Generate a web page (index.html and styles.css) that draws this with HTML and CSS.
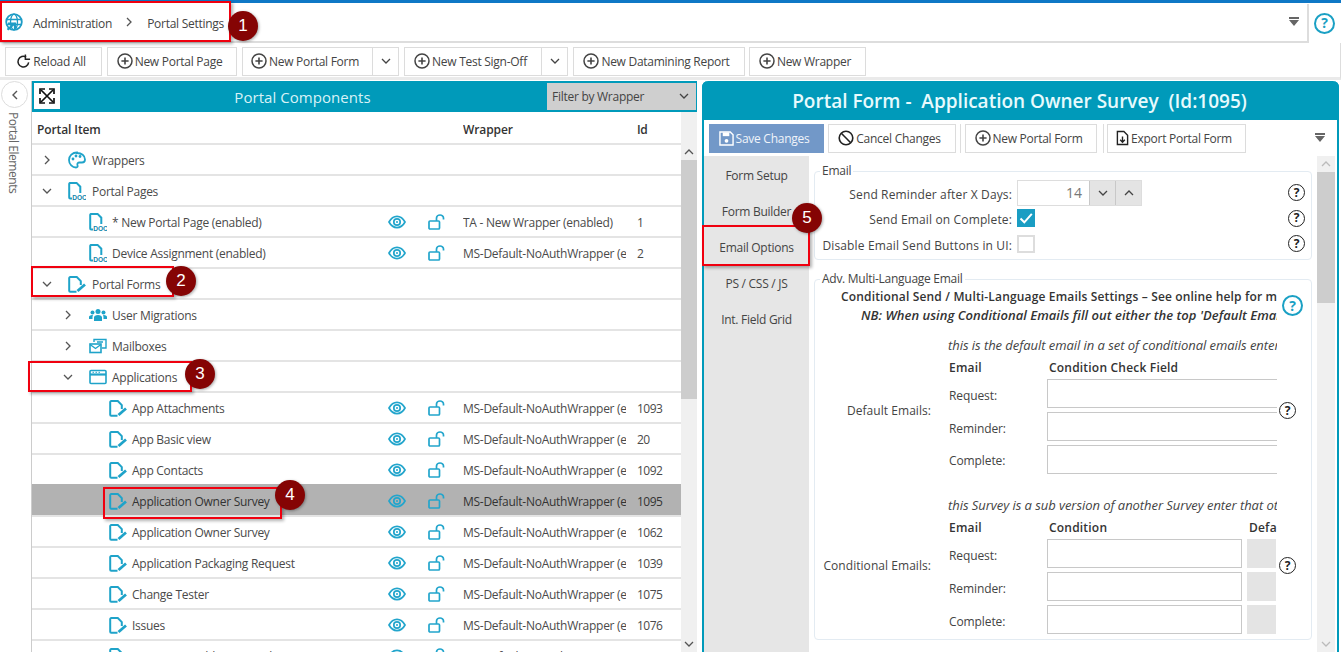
FILE: index.html
```html
<!DOCTYPE html>
<html lang="en">
<head>
<meta charset="utf-8">
<title>Portal Settings</title>
<link rel="stylesheet" href="styles.css">
</head>
<body>
<svg class="defs" width="0" height="0" aria-hidden="true">
  <symbol id="i-plus" viewBox="0 0 16 16"><circle cx="8" cy="8" r="7" fill="none" stroke="currentColor" stroke-width="1.500"/><path d="M8 4.400v7.200M4.400 8h7.200" stroke="currentColor" stroke-width="1.600"/></symbol>
  <symbol id="i-down" viewBox="0 0 12 12"><path d="M2 4l4 4 4-4" fill="none" stroke="currentColor" stroke-width="1.300"/></symbol>
  <symbol id="i-up" viewBox="0 0 12 12"><path d="M2 8l4-4 4 4" fill="none" stroke="currentColor" stroke-width="1.300"/></symbol>
  <symbol id="i-right" viewBox="0 0 12 12"><path d="M4 2l4 4-4 4" fill="none" stroke="currentColor" stroke-width="1.300"/></symbol>
  <symbol id="i-left" viewBox="0 0 12 12"><path d="M8 2L4 6l4 4" fill="none" stroke="currentColor" stroke-width="1.400"/></symbol>
  <symbol id="i-form" viewBox="0 0 18 17"><path d="M8.500 15.800H2.200a1 1 0 0 1-1-1V2.100a1 1 0 0 1 1-1H8.800L12.800 5.100V9" fill="none" stroke="currentColor" stroke-width="2"/><path d="M9.500 15L17 8.500" stroke="currentColor" stroke-width="2.800"/></symbol>
  <symbol id="i-doc" viewBox="0 0 18 18"><path d="M4 16.500H2.200a1 1 0 0 1-1-1V1.900a1 1 0 0 1 1-1H8.500L12.300 4.700V11" fill="none" stroke="currentColor" stroke-width="2"/><text x="4.200" y="17.600" font-family="Liberation Sans" font-size="6.600" font-weight="700" fill="#0f86ab" letter-spacing="0">DOC</text></symbol>
  <symbol id="i-eye" viewBox="0 0 18 14"><path d="M1 7c2-3.700 5-5.600 8-5.600S15 3.300 17 7c-2 3.700-5 5.600-8 5.600S3 10.700 1 7z" fill="none" stroke="currentColor" stroke-width="1.700"/><circle cx="9" cy="7" r="3.200" fill="none" stroke="currentColor" stroke-width="1.700"/><circle cx="9" cy="7" r="1" fill="currentColor"/></symbol>
  <symbol id="i-lock" viewBox="0 0 18 16"><rect x="1" y="7" width="10.500" height="8" rx="1" fill="none" stroke="currentColor" stroke-width="1.700"/><path d="M8.500 7V4a3.500 3 0 0 1 7 0v1.500" fill="none" stroke="currentColor" stroke-width="1.700"/></symbol>
</svg>

<header class="topbar">
  <nav class="crumbs">
    <svg class="globe" viewBox="0 0 18 18" width="18" height="18"><circle cx="9" cy="9" r="7.800" fill="none" stroke="#1e9cc6" stroke-width="1.800"/><ellipse cx="9" cy="9" rx="3.500" ry="7.800" fill="none" stroke="#1e9cc6" stroke-width="1.300"/><path d="M1.500 6.500h15M1.500 11.500h15" stroke="#1e9cc6" stroke-width="1.300"/><path d="M10 10L2.500 16.800M3 10.500h7v6" fill="none" stroke="#1e9cc6" stroke-width="2.200"/></svg>
    <span>Administration</span>
    <svg class="crumb-sep" width="12" height="12"><use href="#i-right"/></svg>
    <span>Portal Settings</span>
  </nav>
  <span class="tri"></span>
  <div class="top-help"><span class="help help-teal help-lg">?</span></div>
</header>

<div class="toolbar">
  <button class="btn btn-reload"><svg viewBox="0 0 16 16" width="15" height="15"><path d="M13.500 9A5.700 5.700 0 1 1 10.800 3.300" fill="none" stroke="#222" stroke-width="1.600"/><path d="M10 0.500v5h5" fill="none" stroke="#222" stroke-width="1.600"/></svg>Reload All</button>
  <button class="btn btn-page"><svg width="16" height="16"><use href="#i-plus"/></svg>New Portal Page</button>
  <div class="split"><button class="btn btn-form"><svg width="16" height="16"><use href="#i-plus"/></svg>New Portal Form</button><button class="btn drop"><svg width="12" height="12"><use href="#i-down"/></svg></button></div>
  <div class="split"><button class="btn btn-test"><svg width="16" height="16"><use href="#i-plus"/></svg>New Test Sign-Off</button><button class="btn drop"><svg width="12" height="12"><use href="#i-down"/></svg></button></div>
  <button class="btn btn-mine"><svg width="16" height="16"><use href="#i-plus"/></svg>New Datamining Report</button>
  <button class="btn btn-wrap"><svg width="16" height="16"><use href="#i-plus"/></svg>New Wrapper</button>
</div>

<main class="main">
  <aside class="rail">
    <button class="collapse"><svg width="12" height="12"><use href="#i-left"/></svg></button>
    <span class="rail-text">Portal Elements</span>
  </aside>

  <section class="tree-panel">
    <div class="tree-head">
      <button class="expand"><svg viewBox="0 0 16 16" width="16" height="16"><path d="M2 2l12 12M14 2L2 14" stroke="#111" stroke-width="1.700"/><path d="M1 6V1h5M10 1h5v5M15 10v5h-5M6 15H1v-5" fill="none" stroke="#111" stroke-width="1.700"/></svg></button>
      <h2 class="tree-title">Portal Components</h2>
      <div class="filter"><span>Filter by Wrapper</span><svg width="12" height="12"><use href="#i-down"/></svg></div>
    </div>
    <div class="tree-body">
      <div class="tree-scroll">
        <div class="row row-head"><span class="col-name">Portal Item</span><span class="col-wrap">Wrapper</span><span class="col-id">Id</span></div>

        <div class="row"><span class="col-name lvl0"><svg class="chev" width="12" height="12"><use href="#i-right"/></svg><svg class="ic" viewBox="0 0 18 18" width="18" height="18"><path d="M9 1.500C4.500 1.500 1 4.700 1 9s3.500 7.500 7 7.500c1.500 0 2-1 1.500-2.200-.6-1.500.3-2.800 2-2.800H14c2 0 3-1.200 3-3 0-4-3.500-6.500-8-6.500z" fill="none" stroke="currentColor" stroke-width="1.800"/><circle cx="5" cy="8" r="1.400" fill="currentColor"/><circle cx="8" cy="5" r="1.400" fill="currentColor"/><circle cx="12" cy="5.500" r="1.400" fill="currentColor"/></svg>Wrappers</span></div>
        <div class="row"><span class="col-name lvl0"><svg class="chev" width="12" height="12"><use href="#i-down"/></svg><svg class="ic" width="18" height="18"><use href="#i-doc"/></svg>Portal Pages</span></div>
        <div class="row"><span class="col-name lvl2"><svg class="ic" width="18" height="18"><use href="#i-doc"/></svg>* New Portal Page (enabled)</span><span class="col-act"><svg width="18" height="14"><use href="#i-eye"/></svg><svg width="18" height="16"><use href="#i-lock"/></svg></span><span class="col-wrap">TA - New Wrapper (enabled)</span><span class="col-id">1</span></div>
        <div class="row"><span class="col-name lvl2"><svg class="ic" width="18" height="18"><use href="#i-doc"/></svg>Device Assignment (enabled)</span><span class="col-act"><svg width="18" height="14"><use href="#i-eye"/></svg><svg width="18" height="16"><use href="#i-lock"/></svg></span><span class="col-wrap">MS-Default-NoAuthWrapper (enabled)</span><span class="col-id">2</span></div>
        <div class="row"><span class="col-name lvl0"><svg class="chev" width="12" height="12"><use href="#i-down"/></svg><svg class="ic" width="18" height="17"><use href="#i-form"/></svg>Portal Forms</span></div>
        <div class="row"><span class="col-name lvl1"><svg class="chev" width="12" height="12"><use href="#i-right"/></svg><svg class="ic" viewBox="0 0 18 14" width="18" height="14"><circle cx="9" cy="3.500" r="2.500" fill="currentColor"/><circle cx="3.500" cy="4.500" r="2" fill="currentColor"/><circle cx="14.500" cy="4.500" r="2" fill="currentColor"/><path d="M5 13V9.500C5 8 6.500 7 9 7s4 1 4 2.500V13zM0 11V9c0-1 1-2 3.500-2l.5.500C3.500 8 3.500 9 3.500 11zM18 11V9c0-1-1-2-3.500-2l-.5.500c.5.500.500 1.500.500 3.500z" fill="currentColor"/></svg>User Migrations</span></div>
        <div class="row"><span class="col-name lvl1"><svg class="chev" width="12" height="12"><use href="#i-right"/></svg><svg class="ic" viewBox="0 0 18 16" width="18" height="16"><path d="M5 4V1.500h12V10h-4" fill="none" stroke="currentColor" stroke-width="1.400"/><rect x="1" y="6" width="11" height="8.500" fill="none" stroke="currentColor" stroke-width="1.600"/><path d="M1 6.500l5.500 4 5.500-4M8 4h6" fill="none" stroke="currentColor" stroke-width="1.400"/></svg>Mailboxes</span></div>
        <div class="row"><span class="col-name lvl1"><svg class="chev" width="12" height="12"><use href="#i-down"/></svg><svg class="ic" viewBox="0 0 18 16" width="18" height="16"><rect x="1" y="1.500" width="16" height="13" rx="1" fill="none" stroke="currentColor" stroke-width="1.600"/><path d="M1 5.500h16" stroke="currentColor" stroke-width="2.200"/><path d="M3.500 3.300h1.500M6.500 3.300H8M9.500 3.300H11" stroke="currentColor" stroke-width="1"/></svg>Applications</span></div>

        <div class="row"><span class="col-name lvl3"><svg class="ic" width="18" height="17"><use href="#i-form"/></svg>App Attachments</span><span class="col-act"><svg width="18" height="14"><use href="#i-eye"/></svg><svg width="18" height="16"><use href="#i-lock"/></svg></span><span class="col-wrap">MS-Default-NoAuthWrapper (enabled)</span><span class="col-id">1093</span></div>
        <div class="row"><span class="col-name lvl3"><svg class="ic" width="18" height="17"><use href="#i-form"/></svg>App Basic view</span><span class="col-act"><svg width="18" height="14"><use href="#i-eye"/></svg><svg width="18" height="16"><use href="#i-lock"/></svg></span><span class="col-wrap">MS-Default-NoAuthWrapper (enabled)</span><span class="col-id">20</span></div>
        <div class="row"><span class="col-name lvl3"><svg class="ic" width="18" height="17"><use href="#i-form"/></svg>App Contacts</span><span class="col-act"><svg width="18" height="14"><use href="#i-eye"/></svg><svg width="18" height="16"><use href="#i-lock"/></svg></span><span class="col-wrap">MS-Default-NoAuthWrapper (enabled)</span><span class="col-id">1092</span></div>
        <div class="row row-sel"><span class="col-name lvl3"><svg class="ic" width="18" height="17"><use href="#i-form"/></svg>Application Owner Survey</span><span class="col-act"><svg width="18" height="14"><use href="#i-eye"/></svg><svg width="18" height="16"><use href="#i-lock"/></svg></span><span class="col-wrap">MS-Default-NoAuthWrapper (enabled)</span><span class="col-id">1095</span></div>
        <div class="row"><span class="col-name lvl3"><svg class="ic" width="18" height="17"><use href="#i-form"/></svg>Application Owner Survey</span><span class="col-act"><svg width="18" height="14"><use href="#i-eye"/></svg><svg width="18" height="16"><use href="#i-lock"/></svg></span><span class="col-wrap">MS-Default-NoAuthWrapper (enabled)</span><span class="col-id">1062</span></div>
        <div class="row"><span class="col-name lvl3"><svg class="ic" width="18" height="17"><use href="#i-form"/></svg>Application Packaging Request</span><span class="col-act"><svg width="18" height="14"><use href="#i-eye"/></svg><svg width="18" height="16"><use href="#i-lock"/></svg></span><span class="col-wrap">MS-Default-NoAuthWrapper (enabled)</span><span class="col-id">1039</span></div>
        <div class="row"><span class="col-name lvl3"><svg class="ic" width="18" height="17"><use href="#i-form"/></svg>Change Tester</span><span class="col-act"><svg width="18" height="14"><use href="#i-eye"/></svg><svg width="18" height="16"><use href="#i-lock"/></svg></span><span class="col-wrap">MS-Default-NoAuthWrapper (enabled)</span><span class="col-id">1075</span></div>
        <div class="row"><span class="col-name lvl3"><svg class="ic" width="18" height="17"><use href="#i-form"/></svg>Issues</span><span class="col-act"><svg width="18" height="14"><use href="#i-eye"/></svg><svg width="18" height="16"><use href="#i-lock"/></svg></span><span class="col-wrap">MS-Default-NoAuthWrapper (enabled)</span><span class="col-id">1076</span></div>
        <div class="row"><span class="col-name lvl3"><svg class="ic" width="18" height="17"><use href="#i-form"/></svg>Messenger Address Search</span><span class="col-act"><svg width="18" height="14"><use href="#i-eye"/></svg><svg width="18" height="16"><use href="#i-lock"/></svg></span><span class="col-wrap">MS-Default-NoAuthWrapper (enabled)</span><span class="col-id">1070</span></div>
      </div>
      <div class="vbar vbar-tree"><span class="vbar-top"><svg width="12" height="12"><use href="#i-up"/></svg></span><span class="vbar-thumb"></span><span class="vbar-fill"></span><span class="vbar-end"><svg width="12" height="12"><use href="#i-down"/></svg></span></div>
    </div>
  </section>

  <section class="form-panel">
    <h1 class="form-title">Portal Form -&nbsp; Application Owner Survey&nbsp; (Id:1095)</h1>
    <div class="form-tools">
      <button class="btn btn-save"><svg viewBox="0 0 16 16" width="15" height="15"><path d="M1 1h11l3 3v11H1z" fill="none" stroke="#fff" stroke-width="1.500"/><path d="M4 1.500h7v4H4z" fill="#fff"/><circle cx="8" cy="10.500" r="2" fill="#fff"/></svg>Save Changes</button>
      <button class="btn btn-cancel"><svg viewBox="0 0 16 16" width="16" height="16"><circle cx="8" cy="8" r="6.800" fill="none" stroke="#222" stroke-width="1.600"/><path d="M3.300 3.300l9.400 9.400" stroke="#222" stroke-width="1.600"/></svg>Cancel Changes</button>
      <span class="tool-sep"></span>
      <button class="btn btn-newform"><svg width="16" height="16"><use href="#i-plus"/></svg>New Portal Form</button>
      <span class="tool-sep sep2"></span>
      <button class="btn btn-export"><svg viewBox="0 0 14 16" width="13" height="16"><path d="M1.500 1h7l4 4v10h-11z" fill="none" stroke="#222" stroke-width="1.500"/><path d="M7 6.500v6M4.500 10L7 12.500 9.500 10" fill="none" stroke="#222" stroke-width="1.500"/></svg>Export Portal Form</button>
      <span class="tri tri-tools"></span>
    </div>
    <div class="form-body">
      <ul class="tabs">
        <li>Form Setup</li>
        <li>Form Builder</li>
        <li class="tab-on">Email Options</li>
        <li>PS / CSS / JS</li>
        <li>Int. Field Grid</li>
      </ul>
      <div class="content">
        <fieldset class="group group-email">
          <legend>Email</legend>
          <div class="opt">
            <label>Send Reminder after X Days:</label>
            <div class="spin"><span class="spin-val">14</span><span class="spin-btn"><svg width="12" height="12"><use href="#i-down"/></svg></span><span class="spin-btn"><svg width="12" height="12"><use href="#i-up"/></svg></span></div>
            <span class="help help-end">?</span>
          </div>
          <div class="opt">
            <label>Send Email on Complete:</label>
            <span class="check check-on"><svg viewBox="0 0 18 18" width="18" height="18"><path d="M3.500 9.500l3.800 3.800 7.500-8.500" fill="none" stroke="#fff" stroke-width="2"/></svg></span>
            <span class="help help-end">?</span>
          </div>
          <div class="opt">
            <label>Disable Email Send Buttons in UI:</label>
            <span class="check"></span>
            <span class="help help-end">?</span>
          </div>
        </fieldset>

        <fieldset class="group group-adv">
          <legend>Adv. Multi-Language Email</legend>
          <div class="adv">
            <div class="adv-clip">
              <p class="note-b">Conditional Send / Multi-Language Emails Settings – See online help for more information</p>
              <p class="note-bi">NB: When using Conditional Emails fill out either the top 'Default Emails' section or the bottom section</p>

              <p class="note-i note-first">this is the default email in a set of conditional emails enter the details here</p>
              <div class="mail-block">
                <span class="mail-label">Default Emails:</span>
                <div class="mail-grid mail-grid-a">
                  <b>Email</b><b>Condition Check Field</b>
                  <span>Request:</span><span class="inp"></span>
                  <span>Reminder:</span><span class="inp"></span>
                  <span>Complete:</span><span class="inp"></span>
                </div>
              </div>

              <p class="note-i note-second">this Survey is a sub version of another Survey enter that other Survey here</p>
              <div class="mail-block mail-block-c">
                <span class="mail-label mail-label-c">Conditional Emails:</span>
                <div class="mail-grid mail-grid-b">
                  <b>Email</b><b>Condition</b><b class="hdr-def">Default</b>
                  <span>Request:</span><span class="inp"></span><span class="gray"></span>
                  <span>Reminder:</span><span class="inp"></span><span class="gray"></span>
                  <span>Complete:</span><span class="inp"></span><span class="gray"></span>
                </div>
              </div>
            </div>
            <div class="adv-helps">
              <span class="help help-teal help-lg">?</span>
              <span class="help help-a">?</span>
              <span class="help help-b">?</span>
            </div>
          </div>
        </fieldset>
      </div>
      <div class="vbar vbar-form"><span class="vbar-top"><svg width="12" height="12"><use href="#i-up"/></svg></span><span class="vbar-thumb"></span><span class="vbar-fill"></span><span class="vbar-end"><svg width="12" height="12"><use href="#i-down"/></svg></span></div>
    </div>
  </section>
</main>

<div class="mark m1"></div><span class="badge b1">1</span>
<div class="mark m2"></div><span class="badge b2">2</span>
<div class="mark m3"></div><span class="badge b3">3</span>
<div class="mark m4"></div><span class="badge b4">4</span>
<div class="mark m5"></div><span class="badge b5">5</span>
</body>
</html>
```
FILE: styles.css
```css
* { box-sizing: border-box; }
html, body { margin: 0; padding: 0; }
body {
  position: relative;
  width: 1341px;
  height: 652px;
  overflow: hidden;
  background: #fff;
  font-family: "Open Sans", "Noto Sans", sans-serif;
  font-size: 12px;
  color: #444;
  letter-spacing: -0.27px;
}
.defs { position: absolute; }
button { font: inherit; letter-spacing: inherit; color: inherit; }
svg { flex: none; display: block; }

/* top */
.topbar {
  height: 43px;
  border-top: 3px solid #0f78c6;
  display: flex;
  align-items: center;
}
.crumbs {
  flex: 1;
  height: 39px;
  display: flex;
  align-items: center;
  padding: 2px 0 0 5px;
  color: #444;
  border-bottom: 2px solid #ddd;
}
.globe { margin: -2px 10px 0 0; }
.crumb-sep { margin: -2px 12px 0 11px; color: #555; }
.tri {
  position: absolute;
  left: 1289px;
  top: 17px;
  width: 10px;
  height: 9px;
  background: #666;
  clip-path: polygon(0 0, 100% 0, 100% 2px, 0 2px, 0 3px, 100% 3px, 50% 100%, 0 3px);
}
.top-help {
  width: 34px;
  height: 39px;
  display: flex;
  align-items: center;
  justify-content: center;
  border-left: 2px solid #ddd;
  padding-right: 1px;
}

/* help icon */
.help {
  display: inline-flex;
  align-items: center;
  justify-content: center;
  width: 17px;
  height: 17px;
  border: 1.800px solid #222;
  border-radius: 50%;
  color: #222;
  font-size: 12px;
  font-weight: 700;
  line-height: 1;
  letter-spacing: 0;
  flex: none;
}
.help-teal { color: #1aa0c4; border-color: #1aa0c4; }
.help-lg { width: 21px; height: 21px; border-width: 2px; font-size: 14px; }

/* toolbar */
.toolbar {
  height: 37px;
  display: flex;
  align-items: center;
  gap: 5px;
  padding-left: 5px;
  border-bottom: 3px solid #eaeaea;
  border-right: 1px solid #ddd;
  padding-top: 3px;
  padding-bottom: 1px;
}
.btn {
  height: 29px;
  display: flex;
  align-items: center;
  justify-content: center;
  gap: 2px;
  background: #fff;
  border: 1px solid #dcdcdc;
  padding: 0 5px 0 0;
  color: #444;
}
.split { display: flex; }
.btn.drop { width: 26px; border-left: 0; padding: 0; }
.btn-reload { width: 97px; }
.btn-page { width: 130px; }
.btn-form { width: 131px; }
.btn-test { width: 138px; }
.btn-mine { width: 172px; }
.btn-wrap { width: 117px; margin-left: -1px; }

/* main */
.main {
  display: flex;
  height: 572px;
  padding-top: 1px;
}
.rail {
  width: 31px;
  display: flex;
  flex-direction: column;
  align-items: flex-start;
  flex: none;
}
.collapse {
  width: 27px;
  height: 27px;
  margin-left: 1px;
  border-radius: 50%;
  border: 1px solid #ddd;
  background: #fff;
  display: flex;
  align-items: center;
  justify-content: center;
  padding: 0;
  color: #555;
}
.rail-text {
  writing-mode: vertical-rl;
  margin-left: 5px;
  margin-top: 4px;
  color: #666;
  font-size: 12px;
  letter-spacing: -0.45px;
}

/* tree */
.tree-panel {
  width: 666px;
  flex: none;
  border-left: 1px solid #ccc;
  display: flex;
  flex-direction: column;
}
.tree-head {
  height: 31px;
  background: #009aba;
  display: flex;
  align-items: center;
  padding: 0 1px 1px 2px;
  color: #fff;
}
.expand {
  width: 26px;
  height: 26px;
  background: #fff;
  border: 0;
  padding: 0;
  display: flex;
  align-items: center;
  justify-content: center;
}
.tree-title {
  flex: 1;
  margin: 0;
  padding: 1px 2px 0 0;
  text-align: center;
  font-size: 15px;
  font-weight: 400;
  color: #d8f2f7;
  letter-spacing: 0.05px;
}
.filter {
  width: 149px;
  height: 27px;
  background: #cfcfcf;
  color: #444;
  display: flex;
  align-items: center;
  justify-content: space-between;
  padding: 0 6px 0 5px;
}
.tree-body { flex: 1; display: flex; min-height: 0; overflow: hidden; }
.tree-scroll { width: 649px; flex: none; }
.row {
  height: 31px;
  display: flex;
  align-items: center;
  border-top: 2px solid #e4e4e4;
  padding-top: 1px;
  color: #4a4a4a;
}
.row-head { color: #333; font-weight: 600; border-top: 0; padding-top: 3px; letter-spacing: -0.1px; }
.row-head .col-name { width: 431px; padding-left: 5px; }
.row-sel { background: #b2b2b2; border-top-color: #b2b2b2; color: #333; }
.col-name { display: flex; align-items: center; width: 345px; flex: none; white-space: nowrap; }
.lvl0 { padding-left: 9px; }
.lvl0 .ic { margin-right: 6px; }
.lvl1 { padding-left: 30px; }
.lvl2 { padding-left: 57px; }
.lvl3 { padding-left: 77px; }
.chev { color: #555; margin-right: 15px; }
.ic { color: #1fa3c9; margin-right: 5px; }
.col-act {
  width: 86px;
  flex: none;
  display: flex;
  align-items: center;
  gap: 22px;
  color: #22a5cc;
  padding-left: 11px;
}
.col-wrap {
  width: 163px;
  flex: none;
  overflow: hidden;
  white-space: nowrap;
}
.col-id { padding-left: 11px; letter-spacing: -0.5px; }

/* scrollbars */
.vbar { display: flex; flex-direction: column; background: #f0f0f0; flex: none; }
.vbar-tree { width: 16px; }
.vbar-top, .vbar-end {
  height: 16px;
  display: flex;
  align-items: center;
  justify-content: center;
  color: #555;
  flex: none;
}
.vbar-tree .vbar-top { margin-top: 32px; }
.vbar-tree .vbar-thumb { height: 239px; background: #cdcdcd; flex: none; }
.vbar-fill { flex: 1; }

/* form panel */
.form-panel {
  margin-left: 5px;
  width: 637px;
  flex: none;
  display: flex;
  flex-direction: column;
  border: 2px solid #009aba;
  border-top: 0;
  border-bottom: 0;
  border-radius: 6px 6px 0 0;
  position: relative;
}
.form-title {
  margin: 0 -2px;
  height: 39px;
  padding-right: 2px;
  background: #009aba;
  color: #e8fafd;
  border-radius: 6px 6px 0 0;
  font-size: 19px;
  font-weight: 600;
  text-align: center;
  line-height: 40px;
  letter-spacing: 0;
}
.form-tools {
  height: 36px;
  flex: none;
  display: flex;
  align-items: center;
  gap: 4px;
  padding-left: 5px;
  position: relative;
}
.form-tools .btn { padding-right: 5px; }
.btn-save { width: 115px; background: #7298c8; color: #f0f4fa; border-color: #7298c8; padding-top: 1px; }
.btn-cancel { width: 128px; }
.btn-newform { width: 132px; }
.btn-export { width: 139px; }
.tool-sep { width: 1px; height: 29px; background: #ddd; }
.sep2 { margin: 0 -1px 0 2px; }
.tri-tools { left: 611px; top: 13px; }
.form-body { flex: 1; display: flex; min-height: 0; overflow: hidden; }
.tabs {
  list-style: none;
  margin: 0;
  padding: 1px 0 0;
  width: 105px;
  flex: none;
  background: #e6e6e6;
}
.tabs li { height: 36px; display: flex; align-items: center; justify-content: center; color: #444; }
.content { width: 508px; flex: none; padding: 8px 0 0 5px; overflow: hidden; }
.group {
  width: 498px;
  margin: 0;
  padding: 0;
  border: 1px solid #e3ebf2;
  border-radius: 4px;
  min-width: 0;
}
.group legend { margin-left: 5px; padding: 0 2px; color: #444; line-height: 14px; }
.group-email { height: 96px; padding-top: 2px; }
.group-adv { margin-top: 12px; height: 368px; }
.opt { height: 25.500px; display: flex; align-items: center; }
.opt label { width: 202px; text-align: right; padding: 3px 5px 0 0; flex: none; letter-spacing: 0.14px; }
.spin { width: 125px; height: 26px; display: flex; border: 1px solid #ddd; }
.spin-val { flex: 1; text-align: right; color: #777; padding-right: 7px; line-height: 24px; font-size: 14px; letter-spacing: 0; }
.spin-btn { width: 26px; background: #e4e4e4; border-left: 1px solid #c8c8c8; display: flex; align-items: center; justify-content: center; color: #444; }
.check { width: 18px; height: 18px; border: 2px solid #ddd; background: #fff; flex: none; display: block; }
.check-on { background: #1a9dc3; border: 0; }
.help-end { margin-left: auto; margin-right: 6px; }

.adv { display: flex; }
.adv-clip { width: 462px; height: 350px; padding-top: 1px; overflow: hidden; flex: none; white-space: nowrap; }
.adv-clip p { margin: 0; }
.note-b { font-weight: 600; color: #333; padding-left: 26px; line-height: 19px; letter-spacing: 0.16px; }
.note-bi { font-weight: 600; font-style: italic; font-size: 13px; color: #333; padding-left: 46px; line-height: 19px; letter-spacing: 0.03px; }
.note-i { font-style: italic; font-size: 13px; color: #444; padding-left: 133px; line-height: 16px; letter-spacing: -0.05px; }
.adv-clip .note-first { margin-top: 12px; }
.adv-clip .note-second { margin-top: 22px; }
.mail-block { display: flex; align-items: center; margin-top: 4px; }
.mail-block-c { margin-top: 4px; }
.mail-label { width: 116px; flex: none; text-align: right; padding-bottom: 12px; letter-spacing: 0.05px; }
.mail-label-c { padding-bottom: 22px; }
.mail-grid { display: grid; grid-template-columns: 98px 1fr; align-items: center; margin-left: 18px; width: 332px; letter-spacing: -0.1px; }
.mail-grid > span { padding-top: 3px; }
.mail-grid-a { grid-template-rows: 20px 33px 33px 32px; width: 328px; }
.mail-grid-b { grid-template-columns: 98px 195px 40px; column-gap: 0; grid-template-rows: 20px 33px 33px 33px; }
.mail-grid b { font-weight: 600; color: #333; letter-spacing: 0.2px; }
.mail-grid b + b { padding-left: 2px; }
.mail-grid .hdr-def { padding-left: 7px; }
.inp { height: 29px; border: 1px solid #c8c8c8; display: block; background: #fff; }
.mail-grid-a .inp { border-right: 0; }
.gray { height: 29px; background: #e4e4e4; display: block; margin-left: 5px; width: 29px; }
.adv-helps { position: relative; flex: 1; }
.adv-helps .help-lg { position: absolute; left: 5px; top: 9px; }
.help-a { position: absolute; left: 2px; top: 116px; }
.help-b { position: absolute; left: 2px; top: 271px; }

.vbar-form { width: 18px; }
.vbar-form .vbar-thumb { height: 131px; background: #cdcdcd; flex: none; }
.vbar-form .vbar-top { height: 16px; color: #bbb; }
.vbar-form .vbar-end { color: #bbb; }

/* annotations */
.mark {
  position: absolute;
  border: 2px solid #f0000f;
  box-shadow: 2px 2px 3px rgba(0,0,0,.3);
}
.m1 { left: 0; top: 1px; width: 231px; height: 41px; }
.m2 { left: 31px; top: 266px; width: 143px; height: 31px; }
.m3 { left: 28px; top: 361px; width: 164px; height: 31px; }
.m4 { left: 103px; top: 487px; width: 179px; height: 32px; }
.m5 { left: 702px; top: 225px; width: 108px; height: 41px; }
.badge {
  position: absolute;
  width: 30px;
  height: 30px;
  border-radius: 50%;
  background: #850404;
  color: #fff;
  font-family: "Liberation Sans", sans-serif;
  font-size: 17px;
  line-height: 30px;
  text-align: center;
  letter-spacing: 0;
  box-shadow: 1px 1px 3px rgba(0,0,0,.35);
}
.b1 { left: 228px; top: 11px; }
.b2 { left: 166px; top: 266px; }
.b3 { left: 185px; top: 359px; }
.b4 { left: 275px; top: 480px; }
.b5 { left: 792px; top: 203px; }
```
